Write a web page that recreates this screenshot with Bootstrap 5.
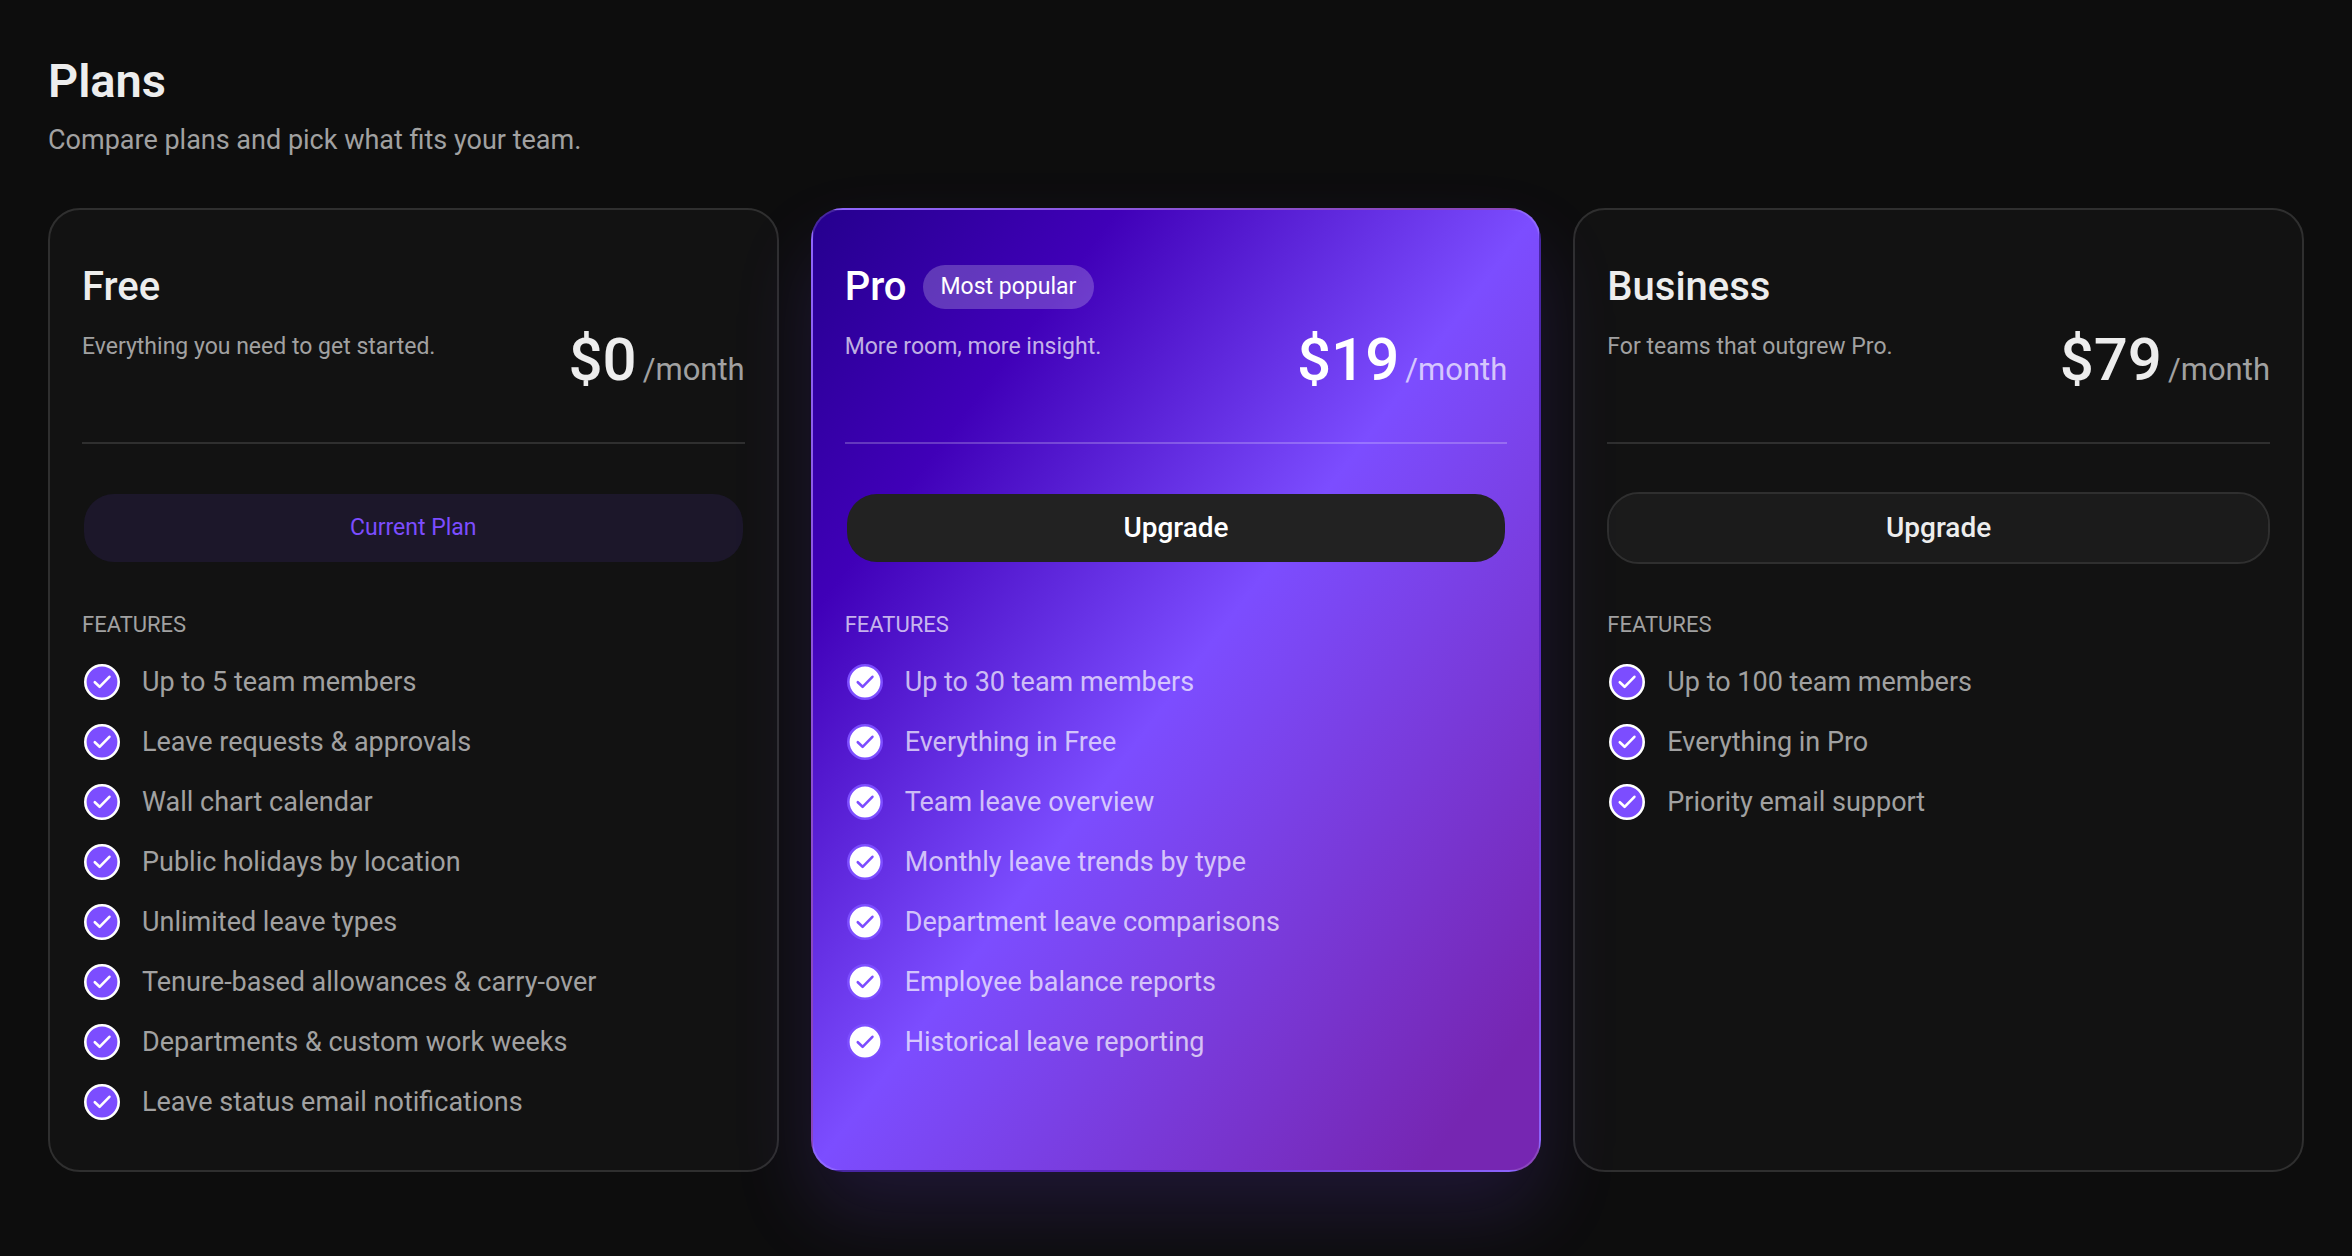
<!DOCTYPE html>
<html lang="en">
<head>
<meta charset="utf-8">
<meta name="viewport" content="width=device-width, initial-scale=1">
<title>Plans</title>
<link rel="stylesheet" href="https://cdn.jsdelivr.net/npm/bootstrap@5.3.0/dist/css/bootstrap.min.css">
<style>
  :root { --violet: #7c4dff; --line: #2f2f2f; --text: #ededed; --soft: #a1a1a1; }
  body { background: #0d0d0d; color: var(--text); font-family: Roboto, "Liberation Sans", sans-serif; font-size: 27px; line-height: 44px; }
  .page { padding: 52px 48px 48px; }
  .page-title { font-size: 47px; line-height: 58px; font-weight: 600; }
  .page-head { margin-bottom: 46px; }
  .plan-grid { --bs-gutter-x: 32px; }
  .soft { color: var(--soft); }

  .plan { --bs-card-bg: #121212; --bs-card-color: var(--text); --bs-card-border-color: var(--line); --bs-card-border-width: 2px; --bs-card-border-radius: 32px; --bs-card-inner-border-radius: 30px; color: var(--text); padding: 54px 32px 46px; }
  .plan-head { padding-bottom: 50px; border-bottom: 2px solid var(--line); margin-bottom: 48px; }
  .plan-name { font-size: 40px; line-height: 46px; font-weight: 500; }
  .plan-top { gap: 16px; margin-bottom: 20px; }
  .plan-note { font-size: 23px; line-height: 34px; }
  .plan-price { gap: 6px; }
  .price { font-size: 60px; line-height: 60px; font-weight: 500; }
  .period { font-size: 31px; line-height: 44px; }
  .plan-badge { --bs-badge-font-size: 23px; --bs-badge-font-weight: 400; --bs-badge-padding-x: 18px; --bs-badge-padding-y: 0; line-height: 44px; background: rgba(255,255,255,.22); }

  .plan-btn { --bs-btn-font-size: 28px; --bs-btn-font-weight: 500; --bs-btn-line-height: 44px; --bs-btn-padding-y: 12px; --bs-btn-border-width: 2px; --bs-btn-border-radius: 32px;
    --bs-btn-color: var(--text); --bs-btn-bg: #1b1b1b; --bs-btn-border-color: var(--line); --bs-btn-hover-color: #fff; --bs-btn-hover-bg: #262626; --bs-btn-hover-border-color: var(--line); background-clip: padding-box; }
  .plan-btn-solid { --bs-btn-bg: #222; --bs-btn-border-color: transparent; }
  .plan-btn-current { --bs-btn-font-size: 23px; --bs-btn-font-weight: 400; --bs-btn-disabled-color: var(--violet); --bs-btn-disabled-bg: #1c172a; --bs-btn-disabled-border-color: transparent; --bs-btn-disabled-opacity: 1; }

  .feature-title { font-size: 22px; line-height: 28px; font-weight: 400; margin: 47px 0 21px; }
  .feature-list { gap: 16px; }
  .feature-list li { gap: 20px; }
  .tick { width: 40px; height: 40px; --ring: #fff; --disc: var(--violet); --mark: #fff; }
  #tick circle { fill: var(--disc); stroke: var(--ring); }
  #tick path { stroke: var(--mark); }

  .plan-pro { --bs-card-border-color: rgba(255,255,255,.15); --line: rgba(255,255,255,.22); --text: #fff; --soft: rgba(255,255,255,.7); z-index: 1;
    background-image: linear-gradient(to bottom right, #25008e 0%, #4000b8 21%, #7c4dff 50%, #7626b2 92%);
    box-shadow: 0 40px 80px rgba(124,77,255,.16); }
  .plan-pro .tick { --ring: var(--violet); --disc: #fff; --mark: var(--violet); }
</style>
</head>
<body>
<svg class="d-none" aria-hidden="true">
  <symbol id="tick" viewBox="0 0 40 40">
    <circle cx="20" cy="20" r="16.7" stroke-width="2.6"/>
    <path d="M12.8 20.2l4.8 4.6 9.8-10" fill="none" stroke-width="2.6" stroke-linecap="round" stroke-linejoin="round"/>
  </symbol>
</svg>
<main class="page container-fluid min-vh-100">
  <header class="page-head">
    <h1 class="page-title mb-2">Plans</h1>
    <p class="soft mb-0">Compare plans and pick what fits your team.</p>
  </header>

  <div class="row row-cols-1 row-cols-lg-3 plan-grid">
    <div class="col">
      <section class="card plan h-100">
        <div class="plan-head">
          <div class="plan-top d-flex align-items-center"><h2 class="plan-name mb-0">Free</h2></div>
          <div class="d-flex justify-content-between align-items-start">
            <p class="plan-note soft mb-0">Everything you need to get started.</p>
            <div class="plan-price d-flex align-items-baseline"><span class="price">$0</span><span class="period soft">/month</span></div>
          </div>
        </div>
        <button type="button" class="btn plan-btn plan-btn-current w-100" disabled>Current Plan</button>
        <h3 class="feature-title soft text-uppercase">Features</h3>
        <ul class="feature-list soft list-unstyled d-flex flex-column mb-0">
          <li class="d-flex align-items-center"><svg class="tick flex-shrink-0" aria-hidden="true"><use href="#tick"/></svg>Up to 5 team members</li>
          <li class="d-flex align-items-center"><svg class="tick flex-shrink-0" aria-hidden="true"><use href="#tick"/></svg>Leave requests &amp; approvals</li>
          <li class="d-flex align-items-center"><svg class="tick flex-shrink-0" aria-hidden="true"><use href="#tick"/></svg>Wall chart calendar</li>
          <li class="d-flex align-items-center"><svg class="tick flex-shrink-0" aria-hidden="true"><use href="#tick"/></svg>Public holidays by location</li>
          <li class="d-flex align-items-center"><svg class="tick flex-shrink-0" aria-hidden="true"><use href="#tick"/></svg>Unlimited leave types</li>
          <li class="d-flex align-items-center"><svg class="tick flex-shrink-0" aria-hidden="true"><use href="#tick"/></svg>Tenure-based allowances &amp; carry-over</li>
          <li class="d-flex align-items-center"><svg class="tick flex-shrink-0" aria-hidden="true"><use href="#tick"/></svg>Departments &amp; custom work weeks</li>
          <li class="d-flex align-items-center"><svg class="tick flex-shrink-0" aria-hidden="true"><use href="#tick"/></svg>Leave status email notifications</li>
        </ul>
      </section>
    </div>

    <div class="col">
      <section class="card plan plan-pro h-100">
        <div class="plan-head">
          <div class="plan-top d-flex align-items-center"><h2 class="plan-name mb-0">Pro</h2><span class="badge rounded-pill plan-badge">Most popular</span></div>
          <div class="d-flex justify-content-between align-items-start">
            <p class="plan-note soft mb-0">More room, more insight.</p>
            <div class="plan-price d-flex align-items-baseline"><span class="price">$19</span><span class="period soft">/month</span></div>
          </div>
        </div>
        <button type="button" class="btn plan-btn plan-btn-solid w-100">Upgrade</button>
        <h3 class="feature-title soft text-uppercase">Features</h3>
        <ul class="feature-list soft list-unstyled d-flex flex-column mb-0">
          <li class="d-flex align-items-center"><svg class="tick flex-shrink-0" aria-hidden="true"><use href="#tick"/></svg>Up to 30 team members</li>
          <li class="d-flex align-items-center"><svg class="tick flex-shrink-0" aria-hidden="true"><use href="#tick"/></svg>Everything in Free</li>
          <li class="d-flex align-items-center"><svg class="tick flex-shrink-0" aria-hidden="true"><use href="#tick"/></svg>Team leave overview</li>
          <li class="d-flex align-items-center"><svg class="tick flex-shrink-0" aria-hidden="true"><use href="#tick"/></svg>Monthly leave trends by type</li>
          <li class="d-flex align-items-center"><svg class="tick flex-shrink-0" aria-hidden="true"><use href="#tick"/></svg>Department leave comparisons</li>
          <li class="d-flex align-items-center"><svg class="tick flex-shrink-0" aria-hidden="true"><use href="#tick"/></svg>Employee balance reports</li>
          <li class="d-flex align-items-center"><svg class="tick flex-shrink-0" aria-hidden="true"><use href="#tick"/></svg>Historical leave reporting</li>
        </ul>
      </section>
    </div>

    <div class="col">
      <section class="card plan h-100">
        <div class="plan-head">
          <div class="plan-top d-flex align-items-center"><h2 class="plan-name mb-0">Business</h2></div>
          <div class="d-flex justify-content-between align-items-start">
            <p class="plan-note soft mb-0">For teams that outgrew Pro.</p>
            <div class="plan-price d-flex align-items-baseline"><span class="price">$79</span><span class="period soft">/month</span></div>
          </div>
        </div>
        <button type="button" class="btn plan-btn w-100">Upgrade</button>
        <h3 class="feature-title soft text-uppercase">Features</h3>
        <ul class="feature-list soft list-unstyled d-flex flex-column mb-0">
          <li class="d-flex align-items-center"><svg class="tick flex-shrink-0" aria-hidden="true"><use href="#tick"/></svg>Up to 100 team members</li>
          <li class="d-flex align-items-center"><svg class="tick flex-shrink-0" aria-hidden="true"><use href="#tick"/></svg>Everything in Pro</li>
          <li class="d-flex align-items-center"><svg class="tick flex-shrink-0" aria-hidden="true"><use href="#tick"/></svg>Priority email support</li>
        </ul>
      </section>
    </div>
  </div>
</main>
<script src="https://cdn.jsdelivr.net/npm/bootstrap@5.3.0/dist/js/bootstrap.bundle.min.js"></script>
</body>
</html>
